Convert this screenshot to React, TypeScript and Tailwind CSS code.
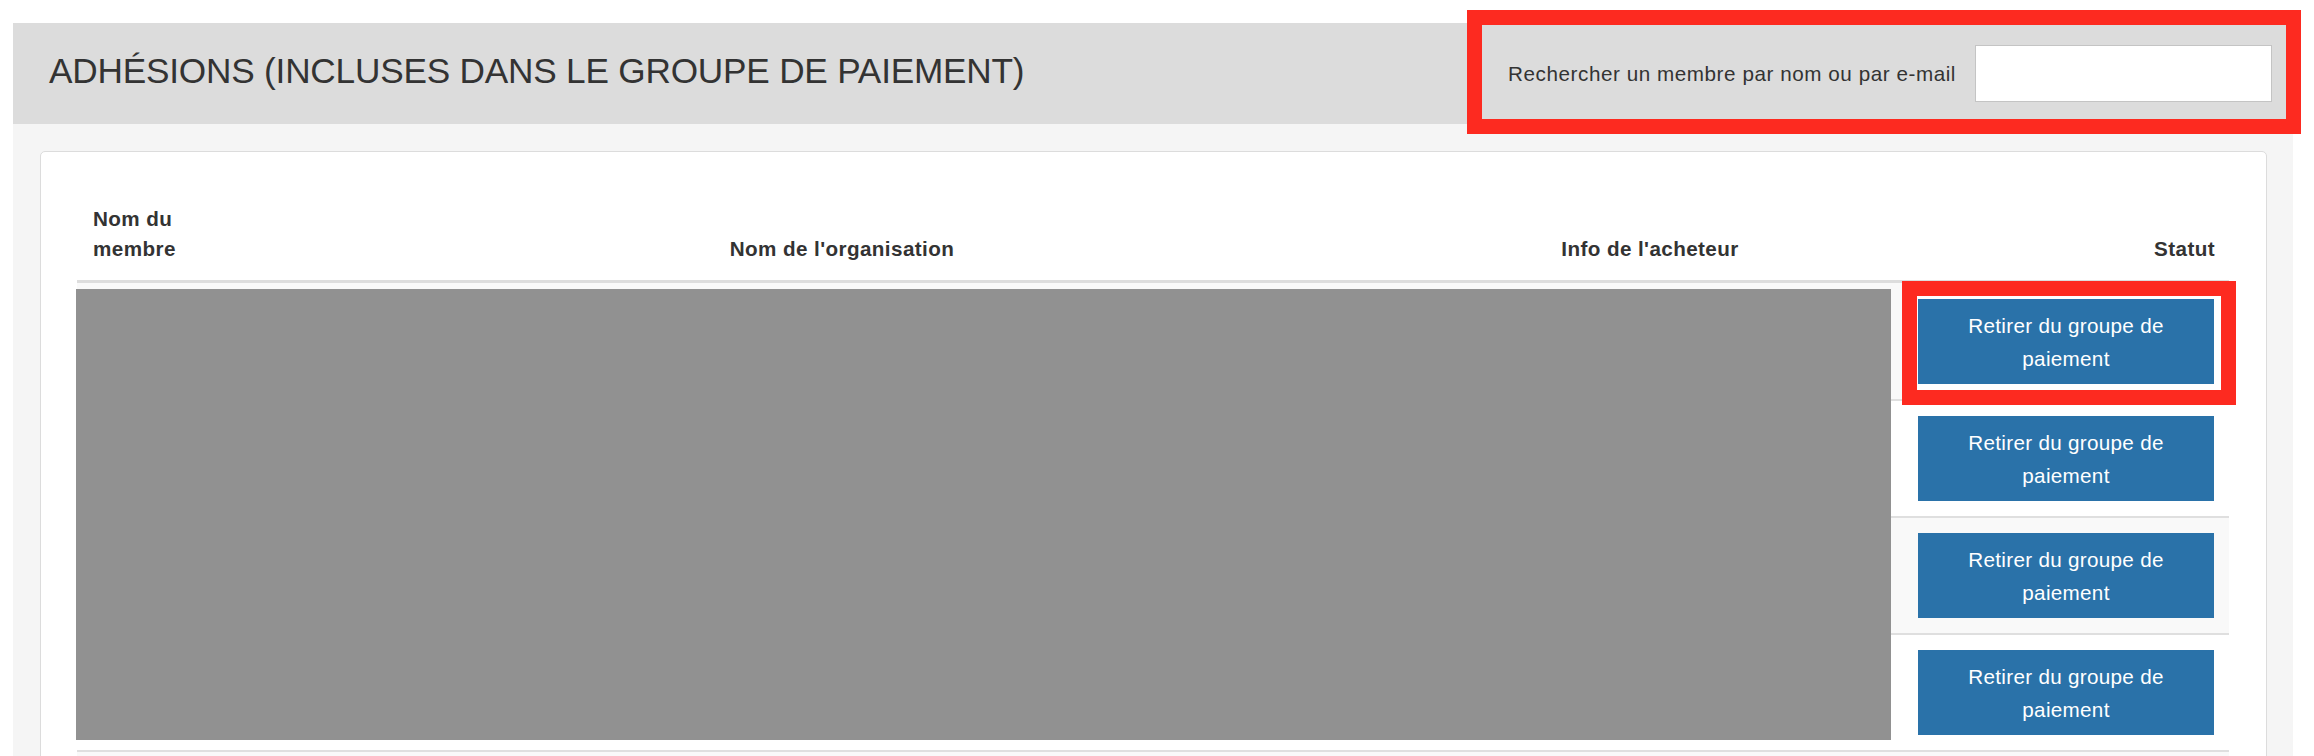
import React from "react";

const rows = [0, 1, 2, 3];

export default function App() {
  return (
    <div className="h-[756px] overflow-hidden bg-white pt-[23px] pl-[13px] pr-[21px] font-['Liberation_Sans','Helvetica_Neue',Arial,sans-serif] text-[#333]">
      {/* Header band */}
      <div className="relative flex h-[101px] items-center justify-between bg-[#dcdcdc] pl-[36px] pr-[21px]">
        <h2 className="mb-[6px] text-[35.2px] font-normal leading-none tracking-[-0.2px] text-[#333]">
          ADHÉSIONS (INCLUSES DANS LE GROUPE DE PAIEMENT)
        </h2>
        <div className="flex items-center gap-[19px]">
          <label className="text-[20.66px] leading-[30px] tracking-[0.55px] text-[#333]">
            Rechercher un membre par nom ou par e-mail
          </label>
          <input
            type="text"
            className="h-[57px] w-[297px] border border-[#c4c4c4] bg-white outline-none"
          />
        </div>
        {/* red annotation */}
        <div className="pointer-events-none absolute left-[1454px] top-[-13px] h-[124px] w-[834px] border-[15px] border-[#fd2a20]" />
      </div>

      {/* Body */}
      <div className="bg-[#f5f5f5] pl-[27px] pr-[26px] pt-[27px] pb-[40px]">
        <div className="rounded-[5px] border border-[#dcdcdc] bg-white pl-[36px] pr-[37px] pt-[41px]">
          {/* thead */}
          <div className="grid grid-cols-[130px_1270px_346px_1fr] items-end border-b-[3px] border-[#dddddd] text-[20.66px] font-bold leading-[30px] tracking-[0.4px] text-[#333]">
            <div className="pl-[16px] pt-[11px] pb-[16px]">Nom du membre</div>
            <div className="pt-[11px] pb-[16px] text-center">Nom de l'organisation</div>
            <div className="pt-[11px] pb-[16px] text-center">Info de l'acheteur</div>
            <div className="pt-[11px] pb-[16px] pr-[14px] text-right">Statut</div>
          </div>

          {/* tbody */}
          <div className="relative">
            {rows.map((i) => (
              <div
                key={i}
                className={`flex justify-end pr-[15px] ${i === 0 ? "pt-[16px]" : "border-t-2 border-[#dfdfdf] pt-[15px]"} pb-[15px] ${i % 2 === 0 ? "bg-[#f9f9f9]" : "bg-white"}`}
              >
                <button className="relative z-10 h-[85px] w-[296px] bg-[#2a72a9] px-[12px] text-center text-[20.66px] leading-[33px] tracking-[0.3px] text-white">
                  Retirer du groupe de paiement
                </button>
              </div>
            ))}
            <div className="h-[117px] border-t-2 border-[#dfdfdf] bg-[#f9f9f9]" />

            {/* redaction overlay */}
            <div className="absolute left-[-1px] top-[6px] h-[451px] w-[1815px] bg-[#919191]" />

            {/* red annotation around first button */}
            <div className="pointer-events-none absolute left-[1825px] top-[-2px] z-0 h-[124px] w-[334px] border-[15px] border-[#fd2a20] bg-white" />
          </div>
        </div>
      </div>
    </div>
  );
}
